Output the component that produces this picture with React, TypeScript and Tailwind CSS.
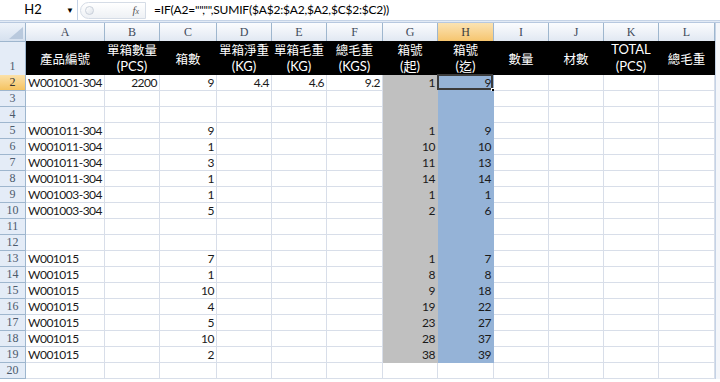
import React from 'react';

type Row = {
  n: number;
  a?: string;
  b?: string;
  c?: string;
  d?: string;
  e?: string;
  f?: string;
  g?: string;
  h?: string;
};

const cols = ['A', 'B', 'C', 'D', 'E', 'F', 'G', 'H', 'I', 'J', 'K', 'L'];
const gridCols =
  'grid grid-cols-[26px_79px_55px_57px_55px_55px_56px_55px_56px_55px_55px_55px_56px]';

// 第1列標題
const headers: string[][] = [
  ['產品編號'],
  ['單箱數量', '(PCS)'],
  ['箱數'],
  ['單箱淨重', '(KG)'],
  ['單箱毛重', '(KG)'],
  ['總毛重', '(KGS)'],
  ['箱號', '(起)'],
  ['箱號', '(迄)'],
  ['數量'],
  ['材數'],
  ['TOTAL', '(PCS)'],
  ['總毛重'],
];

const rows: Row[] = [
  { n: 2, a: 'W001001-304', b: '2200', c: '9', d: '4.4', e: '4.6', f: '9.2', g: '1', h: '9' },
  { n: 3 },
  { n: 4 },
  { n: 5, a: 'W001011-304', c: '9', g: '1', h: '9' },
  { n: 6, a: 'W001011-304', c: '1', g: '10', h: '10' },
  { n: 7, a: 'W001011-304', c: '3', g: '11', h: '13' },
  { n: 8, a: 'W001011-304', c: '1', g: '14', h: '14' },
  { n: 9, a: 'W001003-304', c: '1', g: '1', h: '1' },
  { n: 10, a: 'W001003-304', c: '5', g: '2', h: '6' },
  { n: 11 },
  { n: 12 },
  { n: 13, a: 'W001015', c: '7', g: '1', h: '7' },
  { n: 14, a: 'W001015', c: '1', g: '8', h: '8' },
  { n: 15, a: 'W001015', c: '10', g: '9', h: '18' },
  { n: 16, a: 'W001015', c: '4', g: '19', h: '22' },
  { n: 17, a: 'W001015', c: '5', g: '23', h: '27' },
  { n: 18, a: 'W001015', c: '10', g: '28', h: '37' },
  { n: 19, a: 'W001015', c: '2', g: '38', h: '39' },
  { n: 20 },
];

const dataFont = "font-['Lato','Noto_Sans',sans-serif]";
const headFont = "font-['Liberation_Serif',serif]";

function FormulaBar() {
  return (
    <div className="h-[23px] bg-[#e3ebf6] border-b border-[#b7c8df]">
      <div className="flex h-[21px] items-center bg-white border-b border-[#c5d3e6]">
        <div className="flex h-full w-[78px] items-center border-r border-[#c5d3e6]">
          <span className={`w-[66px] text-center text-[13px] text-black ${dataFont}`}>H2</span>
          <span className="text-[8px] text-black">▼</span>
        </div>
        <div className="ml-[2px] flex h-[17px] w-[66px] items-center rounded-l-full border border-[#d5dce6] bg-gradient-to-b from-white to-[#eef1f5]">
          <span className="ml-[4px] h-[9px] w-[9px] rounded-full border border-[#c9d0da] bg-gradient-to-br from-white to-[#dfe4ea]" />
          <span className="ml-auto mr-[6px] font-['Liberation_Serif',serif] text-[11px] italic text-[#555]">
            f<span className="text-[8px]">x</span>
          </span>
        </div>
        <div className={`ml-[8px] text-[12px] tracking-[-0.2px] text-black ${dataFont}`}>
          =IF(A2=&quot;&quot;,&quot;&quot;,SUMIF($A$2:$A2,$A2,$C$2:$C2))
        </div>
      </div>
    </div>
  );
}

function ColumnHeaders() {
  return (
    <div className={`${gridCols} h-[18px]`}>
      <div className="relative border-r border-b border-[#9eb6ce] bg-gradient-to-b from-[#eef3fa] to-[#d6e1ef]">
        <svg className="absolute bottom-[2px] right-[2px]" width="14" height="12" viewBox="0 0 14 12">
          <polygon points="14,0 14,12 0,12" fill="#b9c9dd" />
        </svg>
      </div>
      {cols.map((c) => (
        <div
          key={c}
          className={`flex items-center justify-center border-r border-b border-[#9eb6ce] text-[12px] ${headFont} ${
            c === 'H'
              ? 'bg-gradient-to-b from-[#fbe3b3] to-[#f6c56e] text-[#3d3d3d]'
              : 'bg-gradient-to-b from-[#fbfcfe] to-[#e1e8f2] text-[#3f4a5a]'
          }`}
        >
          {c}
        </div>
      ))}
    </div>
  );
}

function RowHeader({ n, tall }: { n: number; tall?: boolean }) {
  const sel = n === 2;
  return (
    <div
      className={`flex items-end justify-center border-r border-b border-[#9eb6ce] text-[12px] leading-[15px] ${headFont} ${
        sel ? 'bg-gradient-to-b from-[#fbe1a8] to-[#f5c35f] text-[#333]' : 'bg-[#e4ecf7] text-[#4c5a6c]'
      } ${tall ? 'pb-[1px]' : ''}`}
    >
      {n}
    </div>
  );
}

function Cell({
  v,
  left,
  fill,
  selected,
}: {
  v?: string;
  left?: boolean;
  fill?: 'gray' | 'blue';
  selected?: boolean;
}) {
  const bg =
    fill === 'gray'
      ? 'bg-[#c0c0c0] border-[#c0c0c0]'
      : fill === 'blue'
      ? 'bg-[#95b3d7] border-[#95b3d7]'
      : 'bg-white border-[#d8dee9]';
  return (
    <div
      className={`relative flex min-w-0 items-end whitespace-nowrap border-r border-b px-[2px] text-[12px] tracking-[-0.5px] leading-[15px] text-[#1a1a1a] ${dataFont} ${bg} ${
        left ? 'justify-start' : 'justify-end'
      }`}
    >
      {v}
      {selected && (
        <>
          <div className="absolute -left-[1px] -top-[1px] bottom-0 right-0 border-2 border-[#3b3b3b]" />
          <div className="absolute -bottom-[3px] -right-[3px] h-[5px] w-[5px] border border-white bg-black" />
        </>
      )}
    </div>
  );
}

export default function App() {
  return (
    <div className="h-[382px] w-[720px] overflow-hidden bg-white">
      <FormulaBar />
      <div className="flex">
        <div className="w-[715px]">
          <ColumnHeaders />
          {/* 標題列 */}
          <div className={`${gridCols} h-[34px]`}>
            <RowHeader n={1} tall />
            {headers.map((lines, i) => (
              <div
                key={i}
                className="flex flex-col items-center justify-center border-r border-b border-black bg-black text-[12.5px] text-white"
              >
                {lines.map((l, j) => (
                  <span
                    key={j}
                    className={`leading-[17px] ${
                      j === 0 && lines.length > 1 && l !== 'TOTAL'
                        ? "font-['Noto_Sans_CJK_TC',sans-serif]"
                        : lines.length === 1
                        ? "font-['Noto_Sans_CJK_TC',sans-serif]"
                        : "font-['Lato','Noto_Sans_CJK_TC',sans-serif] text-[13px]"
                    }`}
                  >
                    {l}
                  </span>
                ))}
              </div>
            ))}
          </div>
          {rows.map((r) => (
            <div key={r.n} className={`${gridCols} h-[16px]`}>
              <RowHeader n={r.n} />
              <Cell v={r.a} left />
              <Cell v={r.b} />
              <Cell v={r.c} />
              <Cell v={r.d} />
              <Cell v={r.e} />
              <Cell v={r.f} />
              <Cell v={r.g} fill={r.n <= 19 ? 'gray' : undefined} />
              <Cell v={r.h} fill={r.n <= 19 ? 'blue' : undefined} selected={r.n === 2} />
              <Cell />
              <Cell />
              <Cell />
              <Cell />
            </div>
          ))}
        </div>
        <div className="w-[5px] border-l border-[#c5d3e6] bg-[#f4f6fa]" />
      </div>
    </div>
  );
}
